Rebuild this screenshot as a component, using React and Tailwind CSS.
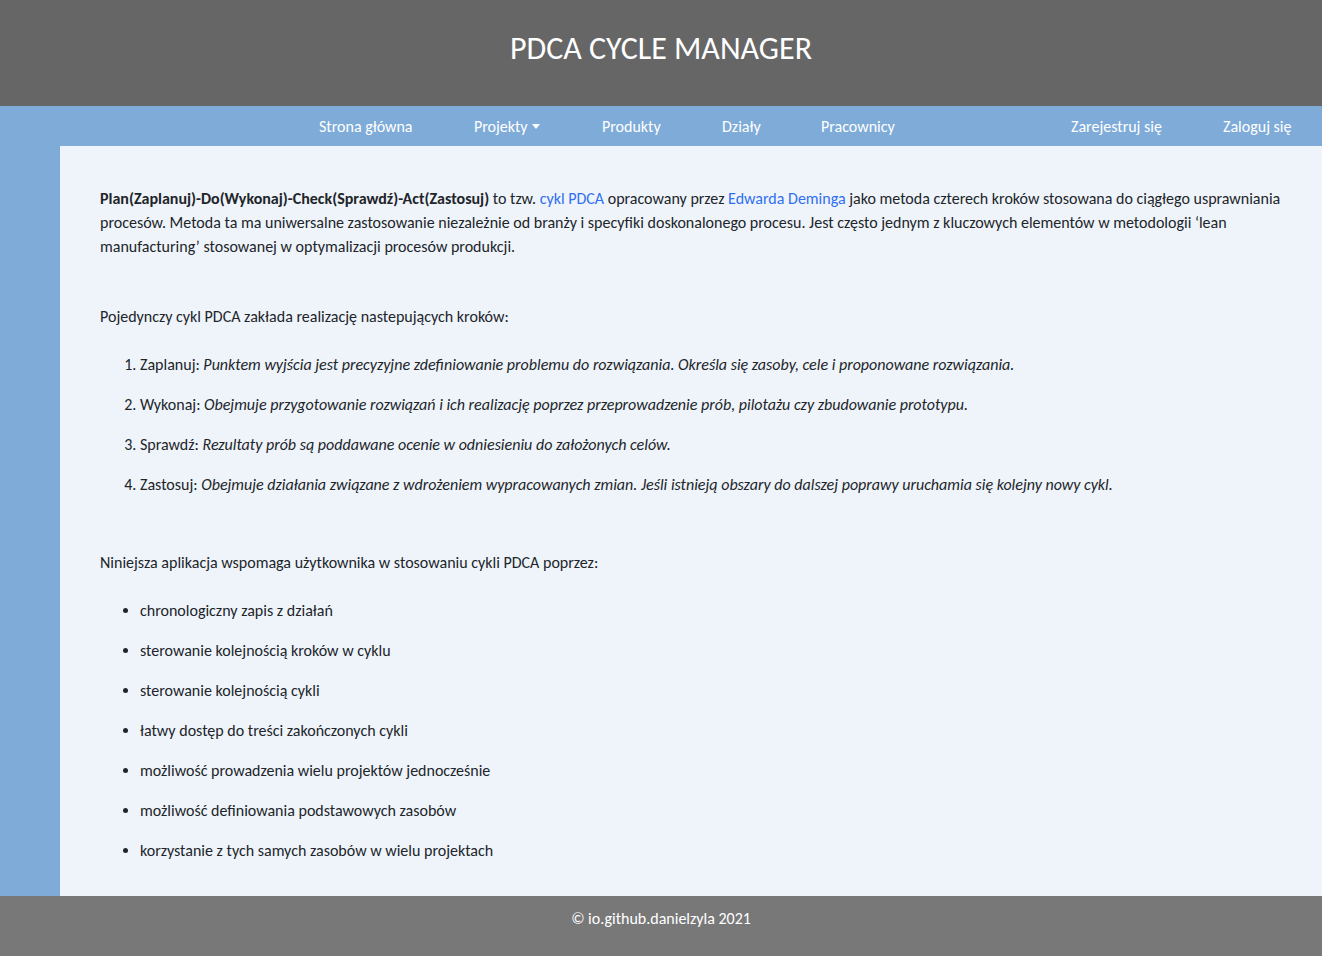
import React from "react";

function NavItem({ w, children }) {
  return (
    <a href="#" className={`block ${w} h-[40px] pt-[1px] pl-[30px] text-white text-[16px] leading-[40px] whitespace-nowrap`}>
      {children}
    </a>
  );
}

export default function App() {
  return (
    <div className="min-h-[956px] flex flex-col bg-[#7eabd8] font-['Carlito','Calibri','Lato',sans-serif]">
      <header className="h-[106px] bg-[#666666] flex items-center justify-center">
        <h1 className="text-white text-[32px] leading-none pb-[8px]">PDCA CYCLE MANAGER</h1>
      </header>
      <nav className="h-[40px] bg-[#7eabd8] flex overflow-hidden">
        <div className="flex ml-[289px]">
          <NavItem w="w-[155px]">Strona główna</NavItem>
          <a href="#" className="flex items-center w-[128px] h-[40px] pt-[1px] pl-[30px] text-white text-[16px] leading-[40px] whitespace-nowrap">
            Projekty
            <span className="ml-[4px] inline-block w-0 h-0 border-l-[4.5px] border-r-[4.5px] border-t-[5px] border-l-transparent border-r-transparent border-t-white"></span>
          </a>
          <NavItem w="w-[120px]">Produkty</NavItem>
          <NavItem w="w-[99px]">Działy</NavItem>
          <NavItem w="w-[99px]">Pracownicy</NavItem>
        </div>
        <div className="flex ml-auto">
          <NavItem w="w-[152px]">Zarejestruj się</NavItem>
          <NavItem w="w-[129px]">Zaloguj się</NavItem>
        </div>
      </nav>
      <div className="flex flex-1">
        <div className="w-[60px] shrink-0 bg-[#7eabd8]"></div>
        <main className="flex-1 bg-[#eff4fb] pt-[41px] pb-[33px] px-[40px] text-[16px] leading-[24px] text-[#212529]">
          <p>
            <b className="font-bold">Plan(Zaplanuj)-Do(Wykonaj)-Check(Sprawdź)-Act(Zastosuj)</b> to tzw.{" "}
            <a href="#" className="text-[#2f6ff0]">cykl PDCA</a> opracowany przez{" "}
            <a href="#" className="text-[#2f6ff0]">Edwarda Deminga</a> jako metoda czterech kroków stosowana do ciągłego usprawniania procesów. Metoda ta ma uniwersalne zastosowanie niezależnie od branży i specyfiki doskonalonego procesu. Jest często jednym z kluczowych elementów w metodologii ‘lean manufacturing’ stosowanej w optymalizacji procesów produkcji.
          </p>
          <p className="mt-[46px]">Pojedynczy cykl PDCA zakłada realizację nastepujących kroków:</p>
          <ol className="mt-[24px] list-decimal pl-[40px] flex flex-col gap-[16px]">
            <li>Zaplanuj: <i>Punktem wyjścia jest precyzyjne zdefiniowanie problemu do rozwiązania. Określa się zasoby, cele i proponowane rozwiązania.</i></li>
            <li>Wykonaj: <i>Obejmuje przygotowanie rozwiązań i ich realizację poprzez przeprowadzenie prób, pilotażu czy zbudowanie prototypu.</i></li>
            <li>Sprawdź: <i>Rezultaty prób są poddawane ocenie w odniesieniu do założonych celów.</i></li>
            <li>Zastosuj: <i>Obejmuje działania związane z wdrożeniem wypracowanych zmian. Jeśli istnieją obszary do dalszej poprawy uruchamia się kolejny nowy cykl.</i></li>
          </ol>
          <p className="mt-[54px]">Niniejsza aplikacja wspomaga użytkownika w stosowaniu cykli PDCA poprzez:</p>
          <ul className="mt-[24px] list-disc pl-[40px] flex flex-col gap-[16px]">
            <li>chronologiczny zapis z działań</li>
            <li>sterowanie kolejnością kroków w cyklu</li>
            <li>sterowanie kolejnością cykli</li>
            <li>łatwy dostęp do treści zakończonych cykli</li>
            <li>możliwość prowadzenia wielu projektów jednocześnie</li>
            <li>możliwość definiowania podstawowych zasobów</li>
            <li>korzystanie z tych samych zasobów w wielu projektach</li>
          </ul>
        </main>
      </div>
      <footer className="h-[60px] bg-[#787878] pt-[11px] text-center text-white text-[16px] leading-[24px]">
        © io.github.danielzyla 2021
      </footer>
    </div>
  );
}
